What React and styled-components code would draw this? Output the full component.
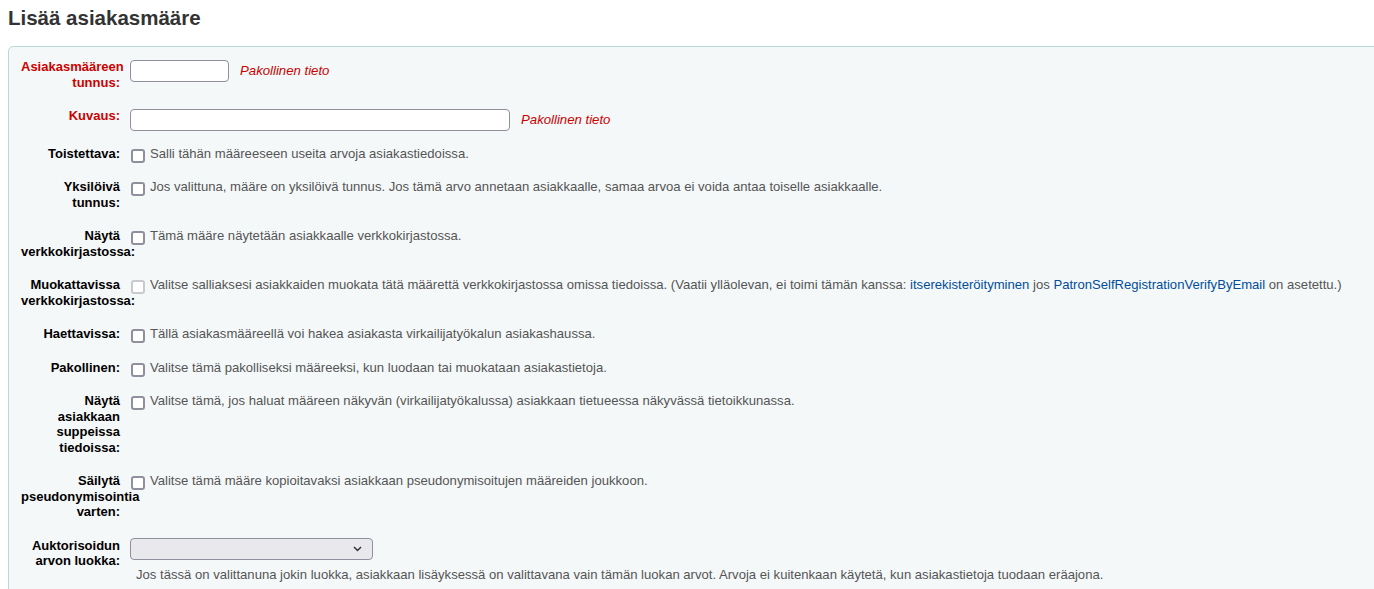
import React from "react";
import styled, { createGlobalStyle } from "styled-components";

const GlobalStyle = createGlobalStyle`
  html, body {
    margin: 0;
    padding: 0;
    overflow: hidden;
    background: #fff;
  }
  body {
    font-family: "Liberation Sans", Arial, sans-serif;
    color: #333;
  }
`;

const Page = styled.div`
  padding: 6px 8px 0 8px;
`;

const Title = styled.h1`
  margin: 0 0 16px 0;
  font-size: 20.5px;
  line-height: 24px;
  font-weight: bold;
  color: #333;
`;

const Fieldset = styled.div`
  margin-right: -40px;
  padding: 12px 12px 0 12px;
  background: #f4f8f9;
  border: 1px solid #b9d8d9;
  border-top-left-radius: 5px;
  min-height: 600px;
`;

const Row = styled.div`
  display: flex;
  align-items: flex-start;
  padding-bottom: 18px;
`;

const Label = styled.label`
  flex: 0 0 99px;
  width: 99px;
  margin-right: 10px;
  text-align: right;
  font-size: 13px;
  line-height: 15.5px;
  font-weight: bold;
  color: ${(p) => (p.$required ? "#cc0000" : "#000")};
  white-space: pre-line;
`;

const Content = styled.div`
  display: flex;
  flex-direction: ${(p) => (p.$column ? "column" : "row")};
  align-items: flex-start;
  font-size: 13.1px;
  line-height: 15.5px;
  color: #555;
`;

const TextInput = styled.input`
  box-sizing: border-box;
  width: ${(p) => p.$width}px;
  height: 22px;
  margin: 1px 0 -6px 0;
  padding: 1px 4px;
  border: 1px solid #8f8f9d;
  border-radius: 4px;
  background: #fff;
  font: inherit;
`;

const Required = styled.span`
  margin: 4px 0 0 11px;
  color: #cc0000;
  font-style: italic;
  font-size: 13.2px;
`;

const Check = styled.input.attrs({ type: "checkbox" })`
  appearance: none;
  box-sizing: border-box;
  flex: 0 0 auto;
  width: 14px;
  height: 14px;
  margin: 3px 5px -3px 1px;
  border: 2px solid ${(p) => (p.disabled ? "#c9c9cf" : "#8f8f9d")};
  border-radius: 3px;
  background: #fff;
`;

const Description = styled.span`
  white-space: nowrap;
`;

const Link = styled.a`
  color: #004d99;
  text-decoration: none;
`;

const SelectWrap = styled.div`
  position: relative;
  width: 243px;
`;

const Select = styled.select`
  appearance: none;
  box-sizing: border-box;
  width: 243px;
  height: 22px;
  border: 1px solid #8f8f9d;
  border-radius: 4px;
  background: #e9e9ed;
  font: inherit;
`;

const Chevron = styled.svg`
  position: absolute;
  right: 11px;
  top: 8px;
  pointer-events: none;
`;

const Hint = styled.div`
  margin-top: 7px;
  padding-left: 6px;
  white-space: nowrap;
`;

const checkRows = [
  { label: "Toistettava:", text: "Salli tähän määreeseen useita arvoja asiakastiedoissa." },
  {
    label: "Yksilöivä\ntunnus:",
    text: "Jos valittuna, määre on yksilöivä tunnus. Jos tämä arvo annetaan asiakkaalle, samaa arvoa ei voida antaa toiselle asiakkaalle.",
  },
  { label: "Näytä\nverkkokirjastossa:", text: "Tämä määre näytetään asiakkaalle verkkokirjastossa." },
  {
    label: "Muokattavissa\nverkkokirjastossa:",
    disabled: true,
    text: (
      <>
        Valitse salliaksesi asiakkaiden muokata tätä määrettä verkkokirjastossa omissa tiedoissa. (Vaatii ylläolevan, ei
        toimi tämän kanssa: <Link href="#">itserekisteröityminen</Link> jos{" "}
        <Link href="#">PatronSelfRegistrationVerifyByEmail</Link> on asetettu.)
      </>
    ),
  },
  { label: "Haettavissa:", text: "Tällä asiakasmääreellä voi hakea asiakasta virkailijatyökalun asiakashaussa." },
  { label: "Pakollinen:", text: "Valitse tämä pakolliseksi määreeksi, kun luodaan tai muokataan asiakastietoja." },
  {
    label: "Näytä\nasiakkaan\nsuppeissa\ntiedoissa:",
    text: "Valitse tämä, jos haluat määreen näkyvän (virkailijatyökalussa) asiakkaan tietueessa näkyvässä tietoikkunassa.",
  },
  {
    label: "Säilytä\npseudonymisointia\nvarten:",
    text: "Valitse tämä määre kopioitavaksi asiakkaan pseudonymisoitujen määreiden joukkoon.",
  },
];

export default function App() {
  return (
    <Page>
      <GlobalStyle />
      <Title>Lisää asiakasmääre</Title>
      <Fieldset>
        <Row>
          <Label $required>{"Asiakasmääreen\ntunnus:"}</Label>
          <Content>
            <TextInput $width={99} />
            <Required>Pakollinen tieto</Required>
          </Content>
        </Row>
        <Row>
          <Label $required>Kuvaus:</Label>
          <Content>
            <TextInput $width={380} />
            <Required>Pakollinen tieto</Required>
          </Content>
        </Row>
        {checkRows.map((r) => (
          <Row key={r.label}>
            <Label>{r.label}</Label>
            <Content>
              <Check disabled={r.disabled} />
              <Description>{r.text}</Description>
            </Content>
          </Row>
        ))}
        <Row>
          <Label>{"Auktorisoidun\narvon luokka:"}</Label>
          <Content $column>
            <SelectWrap>
              <Select>
                <option></option>
              </Select>
              <Chevron width="9" height="6" viewBox="0 0 9 6">
                <path d="M1 1 L4.5 4.5 L8 1" fill="none" stroke="#333" strokeWidth="1.5" />
              </Chevron>
            </SelectWrap>
            <Hint>
              Jos tässä on valittanuna jokin luokka, asiakkaan lisäyksessä on valittavana vain tämän luokan arvot. Arvoja
              ei kuitenkaan käytetä, kun asiakastietoja tuodaan eräajona.
            </Hint>
          </Content>
        </Row>
      </Fieldset>
    </Page>
  );
}
